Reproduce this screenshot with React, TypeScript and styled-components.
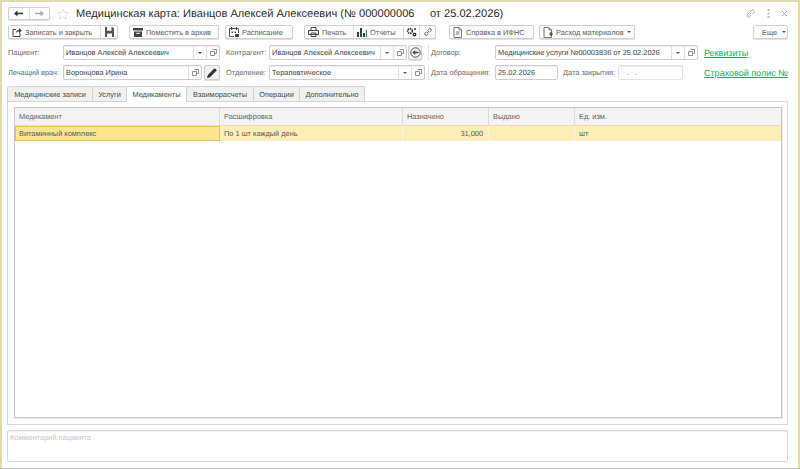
import React from "react";
import styled, { createGlobalStyle } from "styled-components";

const Global = createGlobalStyle`
  html, body { margin: 0; padding: 0; background: #fff; }
  body {
    font-family: "Liberation Sans", Arial, sans-serif;
    font-size: 7.4px;
    color: #4a4a4a;
    text-rendering: geometricPrecision;
  }
`;

const Win = styled.div`
  width: 800px;
  height: 469px;
  box-sizing: border-box;
  display: flex;
  flex-direction: column;
  border-top: 2px solid #e2dba6;
  border-left: 2px solid #e2dba6;
  border-right: 2px solid #e2dba6;
  border-bottom: 1px solid #c8c8c8;
  padding: 4px 10px 0 5px;
  background: #fff;
  overflow: hidden;
`;

const TitleBar = styled.div`
  display: flex;
  align-items: center;
  height: 15px;
  padding-left: 1px;
  flex-shrink: 0;
`;

const NavGroup = styled.div`
  display: flex;
  width: 42px;
  height: 13px;
  box-sizing: border-box;
  border: 1px solid #cfcfcf;
  border-radius: 2px;
  box-shadow: 0 1px 1px #ddd;
  background: #fdfdfd;
`;

const NavBtn = styled.div`
  flex: 1;
  display: flex;
  align-items: center;
  justify-content: center;
  & + & { border-left: 1px solid #e0e0e0; }
`;

const Star = styled.div`
  margin-left: 7px;
  width: 12px;
  display: flex;
`;

const Title = styled.div`
  margin-left: 7px;
  font-size: 11.1px;
  color: #2b2b2b;
  white-space: pre;
  flex: 1;
`;

const WinTools = styled.div`
  display: flex;
  align-items: center;
  gap: 11px;
`;

const Toolbar = styled.div`
  display: flex;
  height: 16px;
  margin-top: 4px;
  padding-left: 1px;
  flex-shrink: 0;
`;

const Group = styled.div<{ $ml?: number }>`
  display: flex;
  height: 14px;
  box-sizing: border-box;
  margin-left: ${(p) => p.$ml ?? 0}px;
  border: 1px solid #cfcfcf;
  border-radius: 2px;
  box-shadow: 0 1px 1px #dedede;
  background: #fdfdfd;
`;

const TBtn = styled.div<{ $w: number }>`
  width: ${(p) => p.$w}px;
  box-sizing: border-box;
  display: flex;
  align-items: center;
  gap: 3px;
  padding-left: 3px;
  color: #5c5c5c;
  white-space: nowrap;
  & + & { border-left: 1px solid #dcdcdc; }
`;

const IconBtn = styled(TBtn)`
  justify-content: center;
  padding-left: 0;
`;

const MoreBtn = styled(TBtn)`
  padding-left: 8px;
  gap: 5px;
`;

const Caret = styled.span`
  width: 0;
  height: 0;
  border-left: 2px solid transparent;
  border-right: 2px solid transparent;
  border-top: 2px solid #555;
`;

const FormGrid = styled.div`
  display: grid;
  grid-template-columns: 55px 157px 49px 156px 70px 203px 1fr;
  grid-auto-rows: 15px;
  row-gap: 5px;
  margin-top: 4px;
  padding-left: 1px;
  flex-shrink: 0;
  align-items: center;
`;

const Label = styled.div<{ $pl?: number; $w?: number }>`
  padding-left: ${(p) => p.$pl ?? 0}px;
  ${(p) => (p.$w ? `width: ${p.$w}px;` : "")}
  color: #6a6a6a;
  white-space: nowrap;
`;

const FieldWrap = styled.div<{ $pr?: number; $gap?: number }>`
  display: flex;
  align-items: center;
  gap: ${(p) => p.$gap ?? 2}px;
  height: 15px;
  padding-right: ${(p) => p.$pr ?? 0}px;
`;

const Box = styled.div<{ $w?: number; $faint?: boolean }>`
  ${(p) => (p.$w ? `width: ${p.$w}px;` : "flex: 1;")}
  flex-shrink: ${(p) => (p.$w ? 0 : 1)};
  height: 15px;
  min-width: 0;
  box-sizing: border-box;
  display: flex;
  align-items: center;
  border: 1px solid ${(p) => (p.$faint ? "#e2e2e2" : "#cdcdcd")};
  border-radius: 2px;
  box-shadow: inset 0 1px 1px #eee;
  background: #fff;
  color: #3f3f3f;
`;

const BoxText = styled.div`
  flex: 1;
  padding-left: 2px;
  white-space: nowrap;
  overflow: hidden;
`;

const DropCell = styled.div`
  width: 12px;
  height: 100%;
  display: flex;
  align-items: center;
  justify-content: center;
  border-left: 1px solid #e0e0e0;
`;

const SquareBtn = styled.div<{ $w: number }>`
  width: ${(p) => p.$w}px;
  height: 15px;
  flex-shrink: 0;
  box-sizing: border-box;
  display: flex;
  align-items: center;
  justify-content: center;
  border: 1px solid #cfcfcf;
  border-radius: 2px;
  background: #f2f2f2;
  box-shadow: 0 1px 1px #ddd;
`;

const DottedCell = styled.div`
  border-left: 1px dotted #cfcfcf;
  height: 15px;
  margin-left: 3px;
  padding-left: 2px;
  display: flex;
  align-items: center;
  color: #6a6a6a;
  white-space: nowrap;
`;

const Link = styled.a`
  margin-left: 6px;
  font-size: 9px;
  color: #22aa62;
  text-decoration: underline;
  white-space: nowrap;
`;

const Tabs = styled.div`
  display: flex;
  margin-top: 6px;
  height: 16px;
  flex-shrink: 0;
  position: relative;
  z-index: 1;
`;

const Tab = styled.div<{ $w: number; $active?: boolean }>`
  width: ${(p) => p.$w}px;
  box-sizing: border-box;
  height: 16px;
  display: flex;
  align-items: center;
  justify-content: center;
  white-space: nowrap;
  color: #4a4a4a;
  border: 1px solid #d2d2d2;
  border-bottom: ${(p) => (p.$active ? "0" : "1px solid #d2d2d2")};
  margin-left: -1px;
  border-radius: 2px 2px 0 0;
  background: ${(p) => (p.$active ? "#fff" : "#f0f0f0")};
  &:first-child { margin-left: 0; }
`;

const Panel = styled.div`
  height: 324px;
  margin-top: -1px;
  box-sizing: border-box;
  border: 1px solid #d8d8d8;
  padding: 5px 5px 6px 6px;
  flex-shrink: 0;
  display: flex;
`;

const Table = styled.div`
  flex: 1;
  border: 1px solid #c8c8c8;
  box-shadow: 1px 1px 0 #e8e8e8;
  display: flex;
  flex-direction: column;
`;

const Row = styled.div<{ $head?: boolean }>`
  display: grid;
  grid-template-columns: 205px 183px 86px 86px 1fr;
  height: ${(p) => (p.$head ? "17px" : "15px")};
  background: ${(p) => (p.$head ? "#f3f3f3" : "#fdeeb5")};
  ${(p) => (p.$head ? "border-bottom: 1px solid #dcdcdc;" : "")}
  color: ${(p) => (p.$head ? "#666" : "#585858")};
`;

const Cell = styled.div<{ $right?: boolean; $current?: boolean; $head?: boolean }>`
  display: flex;
  align-items: center;
  justify-content: ${(p) => (p.$right ? "flex-end" : "flex-start")};
  padding: 0 5px 0 4px;
  box-sizing: border-box;
  white-space: nowrap;
  border-right: 1px solid ${(p) => (p.$head ? "#dcdcdc" : "#fdf6da")};
  ${(p) => (p.$current ? "background: #fde48f; border: 1px solid #f2c33c; padding-left: 3px;" : "")}
  &:last-child { border-right: 0; }
`;

const Comment = styled.div`
  margin-top: 5px;
  height: 32px;
  box-sizing: border-box;
  border: 1px solid #d8d8d8;
  border-radius: 2px;
  box-shadow: inset 0 1px 1px #eee;
  padding: 2px;
  color: #c4c4c4;
  flex-shrink: 0;
`;

const Ico = styled.svg`
  display: block;
  flex-shrink: 0;
`;

const ArrowLeft = () => (
  <Ico width="9" height="7" viewBox="0 0 9 7">
    <path d="M0 3.5 3.5 0.5V2.7H9V4.3H3.5V6.5Z" fill="#333" />
  </Ico>
);
const ArrowRight = () => (
  <Ico width="9" height="7" viewBox="0 0 9 7">
    <path d="M9 3.5 5.5 0.5V2.7H0V4.3H5.5V6.5Z" fill="#aaa" />
  </Ico>
);
const StarIcon = () => (
  <Ico width="12" height="12" viewBox="0 0 24 24">
    <path d="M12 2l3 7 7.5.7-5.7 5 1.8 7.3-6.6-4-6.6 4 1.8-7.3-5.7-5L9 9z" fill="none" stroke="#d8d8d8" strokeWidth="1.6" />
  </Ico>
);
const LinkIcon = ({ c = "#999", s = 10 }: { c?: string; s?: number }) => (
  <Ico width={s} height={s} viewBox="0 0 12 12">
    <path d="M5 7 7 5M4.2 5.6 2.2 7.6a1.6 1.6 0 0 0 2.2 2.2l2-2M7.8 6.4l2-2a1.6 1.6 0 0 0-2.2-2.2l-2 2" fill="none" stroke={c} strokeWidth="1" />
  </Ico>
);
const SaveClose = () => (
  <Ico width="10" height="10" viewBox="0 0 10 10">
    <path d="M1 2.5V9.5H8V6M1 2.5H4" fill="none" stroke="#444" strokeWidth="1" />
    <path d="M4 6C4 3.5 5.5 2.8 7 2.8V1L10 3.6 7 6.2V4.4C5.5 4.4 4.6 5 4 6Z" fill="#444" />
  </Ico>
);
const Floppy = () => (
  <Ico width="9" height="10" viewBox="0 0 9 10">
    <path d="M0 0H2V3.8H6.5V0H7.5L9 1.5V10H7V6.5H2V10H0Z" fill="#555" />
  </Ico>
);
const Archive = () => (
  <Ico width="10" height="9" viewBox="0 0 10 9">
    <path d="M0 0H10V2.5H0ZM1 3.5H9V9H1ZM3.2 4.8V5.8H6.8V4.8Z" fill="#444" fillRule="evenodd" />
  </Ico>
);
const Calendar = () => (
  <Ico width="10" height="10" viewBox="0 0 10 10">
    <path d="M.5 1.5H9.5V6M.5 1.5V9.5H5" fill="none" stroke="#555" />
    <path d="M2 0H3.2V3H2ZM6.8 0H8V3H6.8ZM2.5 4.5H4V6H2.5ZM5.5 4.5H7V6H5.5ZM6 7H10V10H6Z" fill="#444" />
  </Ico>
);
const Printer = () => (
  <Ico width="11" height="10" viewBox="0 0 11 10">
    <path d="M3 3.5V.5H8V3.5M.5 3.5H10.5V7.5H.5ZM3 6H8V9.5H3Z" fill="none" stroke="#444" />
  </Ico>
);
const Bars = () => (
  <Ico width="10" height="9" viewBox="0 0 10 9">
    <path d="M0 4H2V9H0ZM3 0H5V9H3ZM6 5H8V9H6Z" fill="#3c3c3c" />
    <path d="M8.8 2H10V9H8.8Z" fill="#3d7fb5" />
  </Ico>
);
const Gears = () => (
  <Ico width="11" height="10" viewBox="0 0 11 10">
    <circle cx="4" cy="4" r="2.4" fill="none" stroke="#333" strokeWidth="1.6" strokeDasharray="1.4 .6" />
    <circle cx="8.5" cy="7.5" r="1.3" fill="none" stroke="#333" strokeWidth="1.2" />
    <circle cx="9" cy="2" r="1" fill="#333" />
  </Ico>
);
const Doc = ({ plus }: { plus?: boolean }) => (
  <Ico width="10" height="11" viewBox="0 0 10 11">
    <path d="M1 .5H6L8.5 3V10.5H1ZM6 .5V3H8.5" fill="none" stroke="#777" />
    {plus ? <path d="M6 7H10M8 5V9" stroke="#444" strokeWidth="1.2" /> : <path d="M3 5H6.5M3 7H6.5" stroke="#777" />}
  </Ico>
);
const OpenIcon = () => (
  <Ico width="7" height="7" viewBox="0 0 7 7">
    <path d="M2.5.5H6.5V4.5H4.5M.5 2.5H4.5V6.5H.5Z" fill="none" stroke="#777" strokeWidth=".8" />
  </Ico>
);
const Pencil = () => (
  <Ico width="10" height="10" viewBox="0 0 10 10">
    <path d="M0 10 .8 7 7 .8a1 1 0 0 1 1.4 0l.8.8a1 1 0 0 1 0 1.4L3 9.2Z" fill="#333" />
  </Ico>
);
const CircleBack = () => (
  <Ico width="11" height="11" viewBox="0 0 11 11">
    <circle cx="5.5" cy="5.5" r="4.7" fill="none" stroke="#555" />
    <path d="M2.3 5.5 5.2 3V4.7H8.6V6.3H5.2V8Z" fill="#444" />
  </Ico>
);
const Dots = () => (
  <Ico width="3" height="9" viewBox="0 0 3 9">
    <path d="M.5 0H2.5V2H.5ZM.5 3.5H2.5V5.5H.5ZM.5 7H2.5V9H.5Z" fill="#bbb" />
  </Ico>
);
const Cross = () => (
  <Ico width="7" height="7" viewBox="0 0 7 7">
    <path d="M1 1 6 6M6 1 1 6" stroke="#aaa" strokeWidth="1" />
  </Ico>
);

type FieldProps = { text: string; drop?: boolean; open?: boolean };
const Field: React.FC<FieldProps> = ({ text, drop, open }) => (
  <Box>
    <BoxText>{text}</BoxText>
    {drop && (
      <DropCell>
        <Caret />
      </DropCell>
    )}
    {open && (
      <DropCell>
        <OpenIcon />
      </DropCell>
    )}
  </Box>
);

const App: React.FC = () => (
  <>
    <Global />
    <Win>
      <TitleBar>
        <NavGroup>
          <NavBtn><ArrowLeft /></NavBtn>
          <NavBtn><ArrowRight /></NavBtn>
        </NavGroup>
        <Star><StarIcon /></Star>
        <Title>{"Медицинская карта: Иванцов Алексей Алексеевич (№ 000000006     от 25.02.2026)"}</Title>
        <WinTools>
          <LinkIcon c="#a8a8a8" s={11} />
          <Dots />
          <Cross />
        </WinTools>
      </TitleBar>

      <Toolbar>
        <Group>
          <TBtn $w={91}><SaveClose />Записать и закрыть</TBtn>
          <IconBtn $w={17}><Floppy /></IconBtn>
        </Group>
        <Group $ml={11}>
          <TBtn $w={88}><Archive />Поместить в архив</TBtn>
        </Group>
        <Group $ml={6}>
          <TBtn $w={66}><Calendar />Расписание</TBtn>
        </Group>
        <Group $ml={11}>
          <TBtn $w={48}><Printer />Печать</TBtn>
          <TBtn $w={50}><Bars />Отчеты</TBtn>
          <IconBtn $w={16}><Gears /></IconBtn>
          <IconBtn $w={16}><LinkIcon c="#444" /></IconBtn>
        </Group>
        <Group $ml={13}>
          <TBtn $w={83}><Doc />Справка в ИФНС</TBtn>
        </Group>
        <Group $ml={5}>
          <TBtn $w={94}><Doc plus />Расход материалов<Caret /></TBtn>
        </Group>
        <Group $ml={118}>
          <MoreBtn $w={33}>Еще<Caret /></MoreBtn>
        </Group>
      </Toolbar>

      <FormGrid>
        <Label>Пациент:</Label>
        <Field text="Иванцов Алексей Алексеевич" drop open />
        <Label $pl={6}>Контрагент:</Label>
        <FieldWrap $pr={3} $gap={1}>
          <Field text="Иванцов Алексей Алексеевич" drop open />
          <SquareBtn $w={14}><CircleBack /></SquareBtn>
        </FieldWrap>
        <DottedCell>Договор:</DottedCell>
        <Field text="Медицинские услуги №00003836 от 25.02.2026" drop open />
        <Link>Реквизиты</Link>

        <Label>Лечащий врач:</Label>
        <FieldWrap>
          <Field text="Воронцова Ирина" open />
          <SquareBtn $w={16}><Pencil /></SquareBtn>
        </FieldWrap>
        <Label $pl={6}>Отделение:</Label>
        <Field text="Терапевтическое" drop open />
        <DottedCell>Дата обращения:</DottedCell>
        <FieldWrap $gap={5}>
          <Box $w={63}><BoxText>25.02.2026</BoxText></Box>
          <Label $w={50}>Дата закрытия:</Label>
          <Box $w={65} $faint><BoxText>&nbsp;&nbsp;&nbsp;.&nbsp;&nbsp;&nbsp;.</BoxText></Box>
        </FieldWrap>
        <Link>Страховой полис №</Link>
      </FormGrid>

      <Tabs>
        <Tab $w={86}>Медицинские записи</Tab>
        <Tab $w={35}>Услуги</Tab>
        <Tab $w={61} $active>Медикаменты</Tab>
        <Tab $w={68}>Взаиморасчеты</Tab>
        <Tab $w={47}>Операции</Tab>
        <Tab $w={66}>Дополнительно</Tab>
      </Tabs>

      <Panel>
        <Table>
          <Row $head>
            <Cell $head>Медикамент</Cell>
            <Cell $head>Расшифровка</Cell>
            <Cell $head>Назначено</Cell>
            <Cell $head>Выдано</Cell>
            <Cell $head>Ед. изм.</Cell>
          </Row>
          <Row>
            <Cell $current>Витаминный комплекс</Cell>
            <Cell>По 1 шт каждый день</Cell>
            <Cell $right>31,000</Cell>
            <Cell />
            <Cell>шт</Cell>
          </Row>
        </Table>
      </Panel>

      <Comment>Комментарий пациента</Comment>
    </Win>
  </>
);

export default App;
